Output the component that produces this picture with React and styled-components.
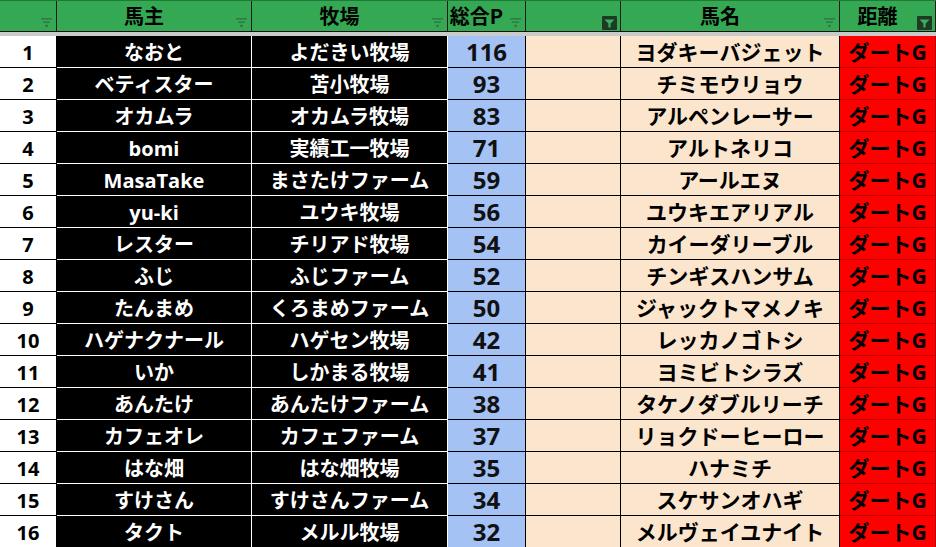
import React from 'react';
import styled, { createGlobalStyle, css } from 'styled-components';

const GlobalStyle = createGlobalStyle`
  html, body {
    margin: 0;
    padding: 0;
    background: #fff;
  }
  body {
    font-family: "Open Sans", "Noto Sans CJK JP", sans-serif;
  }
`;

const COLUMNS = '57px 195px 196px 78px 95px 219px 96px';

const Sheet = styled.div`
  width: 936px;
  height: 547px;
  overflow: hidden;
  background: #fff;
`;

const HeaderRow = styled.div`
  display: grid;
  grid-template-columns: ${COLUMNS};
  height: 32px;
  box-sizing: border-box;
  background: #34a853;
  border-top: 1px solid #1f7a39;
  border-bottom: 1px solid #111;
`;

const HeaderCell = styled.div`
  display: grid;
  grid-template-columns: 1fr 20px;
  border-right: 1px solid #1c1c1c;
  min-width: 0;
`;

const HeaderLabel = styled.div`
  align-self: center;
  text-align: center;
  font-family: "Noto Sans CJK JP", sans-serif;
  font-weight: 700;
  font-size: 20px;
  line-height: 1;
  color: #000;
  white-space: nowrap;
`;

const IconSlot = styled.div`
  display: flex;
  justify-content: flex-end;
  align-items: flex-end;
  padding: 0 ${p => (p.$active ? 3 : 4)}px ${p => (p.$active ? 1 : 4)}px 0;
`;

const Gap = styled.div`
  height: 4px;
  background: #cacaca;
`;

const Row = styled.div`
  display: grid;
  grid-template-columns: ${COLUMNS};
  height: 32px;
`;

const tones = {
  num: css`
    background: #fff;
    color: #000;
    border-bottom-color: #000;
    border-right-color: #000;
    font-size: 20px;
  `,
  dark: css`
    background: #000;
    color: #fff;
    border-bottom-color: #fff;
    border-right-color: #fff;
    font-size: 20px;
  `,
  blue: css`
    background: #a4c2f4;
    color: #111;
    border-bottom-color: #000;
    border-right-color: #000;
    font-size: 24px;
    padding-top: 0;
  `,
  peach: css`
    background: #fce5cd;
    color: #000;
    border-bottom-color: #000;
    border-right-color: #000;
    font-size: 21px;
  `,
  red: css`
    background: #ff0000;
    color: #000;
    border-bottom-color: #b30000;
    border-right-color: #b30000;
    font-size: 21px;
  `,
};

const Cell = styled.div`
  display: flex;
  align-items: center;
  justify-content: center;
  box-sizing: border-box;
  border-bottom: 1px solid;
  border-right: 1px solid;
  font-weight: 700;
  line-height: 1;
  white-space: nowrap;
  overflow: hidden;
  padding-top: 2px;
  ${p => tones[p.$tone]}
`;

const FilterMark = () => (
  <svg width="11" height="9" viewBox="0 0 11 9">
    <rect x="0" y="0" width="11" height="1.6" fill="#2f7d45" />
    <rect x="2" y="3.4" width="7" height="1.6" fill="#2f7d45" />
    <rect x="4" y="6.8" width="3" height="2.2" fill="#2f7d45" />
  </svg>
);

const FilterActive = () => (
  <svg width="15" height="14" viewBox="0 0 15 14">
    <rect x="0" y="0" width="15" height="14" rx="1" fill="#1d3a24" />
    <path d="M2.5 3.5 H12.5 L8.6 7.6 V11.5 H6.4 V7.6 Z" fill="#3dae5c" />
  </svg>
);

const headers = [
  { label: '' },
  { label: '馬主' },
  { label: '牧場' },
  { label: '総合P' },
  { label: '', active: true },
  { label: '馬名' },
  { label: '距離', active: true },
];

const rows = [
  ['なおと', 'よだきい牧場', 116, 'ヨダキーバジェット'],
  ['ベティスター', '苫小牧場', 93, 'チミモウリョウ'],
  ['オカムラ', 'オカムラ牧場', 83, 'アルペンレーサー'],
  ['bomi', '実績工一牧場', 71, 'アルトネリコ'],
  ['MasaTake', 'まさたけファーム', 59, 'アールエヌ'],
  ['yu-ki', 'ユウキ牧場', 56, 'ユウキエアリアル'],
  ['レスター', 'チリアド牧場', 54, 'カイーダリーブル'],
  ['ふじ', 'ふじファーム', 52, 'チンギスハンサム'],
  ['たんまめ', 'くろまめファーム', 50, 'ジャックトマメノキ'],
  ['ハゲナクナール', 'ハゲセン牧場', 42, 'レッカノゴトシ'],
  ['いか', 'しかまる牧場', 41, 'ヨミビトシラズ'],
  ['あんたけ', 'あんたけファーム', 38, 'タケノダブルリーチ'],
  ['カフェオレ', 'カフェファーム', 37, 'リョクドーヒーロー'],
  ['はな畑', 'はな畑牧場', 35, 'ハナミチ'],
  ['すけさん', 'すけさんファーム', 34, 'スケサンオハギ'],
  ['タクト', 'メルル牧場', 32, 'メルヴェイユナイト'],
];

export default function App() {
  return (
    <Sheet>
      <GlobalStyle />
      <HeaderRow>
        {headers.map((h, i) => (
          <HeaderCell key={i}>
            <HeaderLabel>{h.label}</HeaderLabel>
            <IconSlot $active={h.active}>
              {h.active ? <FilterActive /> : <FilterMark />}
            </IconSlot>
          </HeaderCell>
        ))}
      </HeaderRow>
      <Gap />
      {rows.map(([owner, farm, points, horse], i) => (
        <Row key={i}>
          <Cell $tone="num">{i + 1}</Cell>
          <Cell $tone="dark">{owner}</Cell>
          <Cell $tone="dark">{farm}</Cell>
          <Cell $tone="blue">{points}</Cell>
          <Cell $tone="peach" />
          <Cell $tone="peach">{horse}</Cell>
          <Cell $tone="red">ダートG</Cell>
        </Row>
      ))}
    </Sheet>
  );
}
